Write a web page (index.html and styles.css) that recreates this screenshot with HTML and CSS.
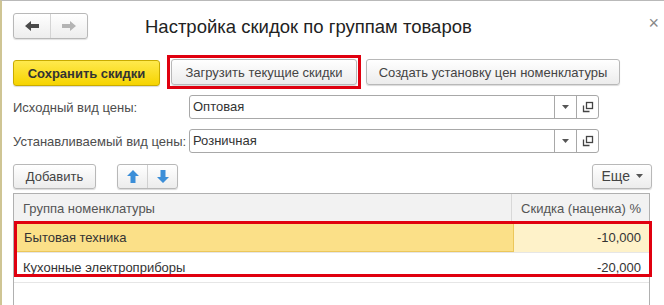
FILE: index.html
```html
<!DOCTYPE html>
<html lang="ru">
<head>
    <meta charset="UTF-8">
    <title>Настройка скидок по группам товаров</title>
    <link rel="stylesheet" href="styles.css">
</head>
<body>
    <div class="window">
        <div class="header">
            <div class="nav">
                <span class="nav-btn">
                    <svg width="16" height="12" viewBox="0 0 16 12"><path d="M1 6 L7 1 L7 4 L15 4 L15 8 L7 8 L7 11 Z" fill="#4a4a4a"/></svg>
                </span>
                <span class="nav-btn">
                    <svg width="16" height="12" viewBox="0 0 16 12"><path d="M15 6 L9 1 L9 4 L1 4 L1 8 L9 8 L9 11 Z" fill="#b4b4b4"/></svg>
                </span>
            </div>
            <h1 class="title">Настройка скидок по группам товаров</h1>
            <span class="close">×</span>
        </div>

        <div class="actions">
            <button class="btn btn-main">Сохранить скидки</button>
            <div class="marked">
                <button class="btn">Загрузить текущие скидки</button>
            </div>
            <button class="btn">Создать установку цен номенклатуры</button>
        </div>

        <div class="field">
            <label class="field-label">Исходный вид цены:</label>
            <div class="input">
                <span class="input-text">Оптовая</span>
                <span class="input-btn"><svg width="7" height="4" viewBox="0 0 7 4"><path d="M0 0 L7 0 L3.5 4 Z" fill="#555"/></svg></span>
                <span class="input-btn"><svg width="12" height="12" viewBox="0 0 12 12"><path d="M1.5 4.5 V10.5 H7.5" fill="none" stroke="#444" stroke-width="1.3"/><rect x="4.5" y="1.5" width="6" height="6" fill="none" stroke="#444" stroke-width="1.3"/></svg></span>
            </div>
        </div>

        <div class="field">
            <label class="field-label">Устанавливаемый вид цены:</label>
            <div class="input">
                <span class="input-text">Розничная</span>
                <span class="input-btn"><svg width="7" height="4" viewBox="0 0 7 4"><path d="M0 0 L7 0 L3.5 4 Z" fill="#555"/></svg></span>
                <span class="input-btn"><svg width="12" height="12" viewBox="0 0 12 12"><path d="M1.5 4.5 V10.5 H7.5" fill="none" stroke="#444" stroke-width="1.3"/><rect x="4.5" y="1.5" width="6" height="6" fill="none" stroke="#444" stroke-width="1.3"/></svg></span>
            </div>
        </div>

        <div class="toolbar">
            <button class="btn btn-add">Добавить</button>
            <div class="move">
                <span class="move-btn"><svg width="12" height="13" viewBox="0 0 12 13"><path d="M6 0 L12 6 L8.5 6 L8.5 13 L3.5 13 L3.5 6 L0 6 Z" fill="#3b8ed8"/></svg></span>
                <span class="move-btn"><svg width="12" height="13" viewBox="0 0 12 13"><path d="M6 13 L12 7 L8.5 7 L8.5 0 L3.5 0 L3.5 7 L0 7 Z" fill="#3b8ed8"/></svg></span>
            </div>
            <button class="btn btn-more">Еще <svg width="7" height="4" viewBox="0 0 7 4"><path d="M0 0 L7 0 L3.5 4 Z" fill="#555"/></svg></button>
        </div>

        <div class="table">
            <div class="row head">
                <div class="cell name">Группа номенклатуры</div>
                <div class="cell value">Скидка (наценка) %</div>
            </div>
            <div class="row current">
                <div class="cell name">Бытовая техника</div>
                <div class="cell value">-10,000</div>
            </div>
            <div class="row">
                <div class="cell name">Кухонные электроприборы</div>
                <div class="cell value">-20,000</div>
            </div>
            <div class="rows-mark"></div>
        </div>
    </div>
</body>
</html>
```

FILE: styles.css
```css
body {
    margin: 0;
    background: #fff;
    font-family: 'Liberation Sans', Arial, sans-serif;
    font-size: 13px;
    color: #4d4d4d;
    overflow: hidden;
}

.window {
    height: 305px;
    border-top: 1px solid #b9b9b9;
    border-left: 2px solid #cfc594;
    box-sizing: border-box;
    padding: 0 12px 0 11px;
}

.header {
    display: flex;
    align-items: center;
    height: 36px;
    margin-top: 12px;
    margin-bottom: 6px;
}

.header .nav {
    display: flex;
    height: 24px;
    align-self: flex-start;
    border: 1px solid #b8b8b8;
    border-radius: 3px;
    background: linear-gradient(#ffffff, #ededed);
    box-shadow: 0 1px 1px rgba(0, 0, 0, 0.12);
}

.nav-btn {
    width: 36px;
    display: flex;
    align-items: center;
    justify-content: center;
}

.nav-btn + .nav-btn {
    border-left: 1px solid #d4d4d4;
}

.title {
    margin: 0 0 8px 57px;
    font-size: 18.5px;
    font-weight: normal;
    color: #222;
    white-space: nowrap;
}

.close {
    margin-left: auto;
    margin-bottom: 16px;
    font-size: 18px;
    color: #888;
    margin-right: -7px;
}

.actions {
    display: flex;
    align-items: center;
    height: 34px;
}

.btn {
    font-family: inherit;
    font-size: 13px;
    color: #444;
    height: 26px;
    padding: 0;
    white-space: nowrap;
    border: 1px solid #b8b8b8;
    border-radius: 3px;
    background: linear-gradient(#ffffff, #ececec);
    box-shadow: 0 1px 1px rgba(0, 0, 0, 0.15);
}

.btn-main {
    width: 147px;
    font-weight: bold;
    color: #333;
    border-color: #c9ab00;
    background: linear-gradient(#ffe94d, #f6d400);
    margin-right: 7px;
    margin-top: 2px;
}

.marked {
    border: 3px solid #e0000f;
    padding: 1px;
    margin-right: 5px;
    display: flex;
}

.marked .btn {
    width: 186px;
}

.actions > .btn:last-child {
    width: 254px;
}

.field {
    display: flex;
    align-items: center;
    height: 24px;
    margin-top: 6px;
    margin-bottom: 10px;
}

.field + .field {
    margin-top: 0;
}

.field-label {
    width: 176px;
    flex-shrink: 0;
}

.input {
    display: flex;
    width: 410px;
    height: 24px;
    box-sizing: border-box;
    border: 1px solid #a8a8a8;
    border-radius: 3px;
    background: #fff;
}

.input-text {
    flex: 1;
    padding-left: 3px;
    line-height: 22px;
    color: #333;
}

.input-btn {
    width: 21px;
    display: flex;
    align-items: center;
    justify-content: center;
    border-left: 1px solid #a8a8a8;
}

.toolbar {
    display: flex;
    align-items: center;
    height: 26px;
    margin-bottom: 4px;
}

.btn-add {
    width: 83px;
    height: 25px;
    margin-right: 21px;
}

.move {
    display: flex;
    height: 25px;
    box-sizing: border-box;
    border: 1px solid #b8b8b8;
    border-radius: 3px;
    background: linear-gradient(#ffffff, #ececec);
    box-shadow: 0 1px 1px rgba(0, 0, 0, 0.15);
}

.move-btn {
    width: 29px;
    display: flex;
    align-items: center;
    justify-content: center;
}

.move-btn + .move-btn {
    border-left: 1px solid #d0d0d0;
}

.btn-more {
    margin-left: auto;
    width: 60px;
    height: 25px;
    padding: 0 8px;
    font-size: 14px;
    display: flex;
    align-items: center;
    justify-content: flex-end;
    gap: 6px;
}

.table {
    position: relative;
    height: 120px;
    border: 1px solid #b0b0b0;
    width: 637px;
    box-sizing: border-box;
}

.row {
    display: flex;
    height: 30px;
    border-bottom: 1px solid #e6e6e6;
    box-sizing: border-box;
}

.row.head {
    height: 29px;
    background: #f2f2f2;
    border-bottom: 1px solid #dcdcdc;
}

.cell {
    display: flex;
    align-items: center;
    padding: 0 9px;
    color: #333;
    white-space: nowrap;
}

.cell.name {
    width: 500px;
    box-sizing: border-box;
}

.cell.value {
    flex: 1;
    justify-content: flex-end;
    padding-right: 8px;
}

.head .cell {
    color: #555;
}

.head .cell.name {
    border-right: 1px solid #d8d8d8;
}

.current .cell.name {
    background: #fbe088;
    border: 1px solid #ecc75a;
}

.current .cell.value {
    background: #fef2c9;
}

.rows-mark {
    position: absolute;
    left: 0;
    top: 27px;
    width: 632px;
    height: 50px;
    border: 3px solid #e0000f;
}
```
